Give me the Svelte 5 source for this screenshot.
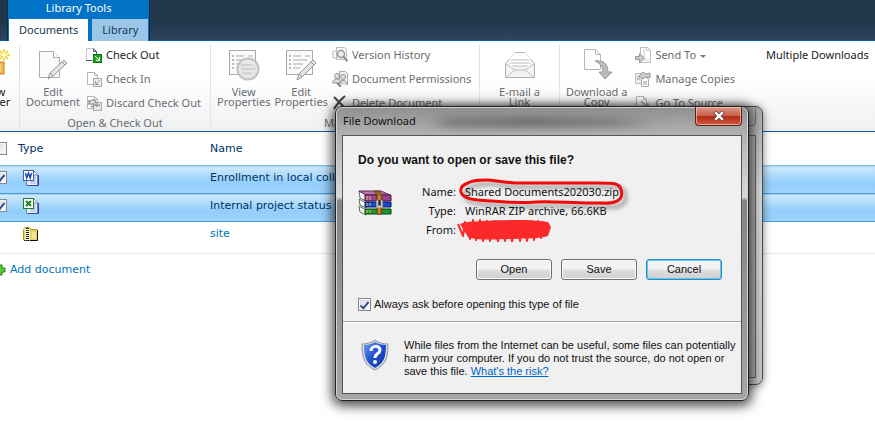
<script lang="ts">
  interface Row {
    kind: 'word' | 'excel' | 'zip';
    name: string;
    selected: boolean;
  }

  let rows: Row[] = $state([
    { kind: 'word', name: 'Enrollment in local college', selected: true },
    { kind: 'excel', name: 'Internal project status', selected: true },
    { kind: 'zip', name: 'site', selected: false }
  ]);

  let allSelected = $state(false);
  let alwaysAsk = $state(true);
</script>

{#snippet page()}
  <path d="M1.5 1.5h7l3 3v9h-10z" fill="#fff" stroke="#b5b5b5" />
  <path d="M8.5 1.5v3h3" fill="none" stroke="#b5b5b5" />
{/snippet}

{#snippet fileIcon(kind: Row['kind'])}
  <svg class="file-icon" width="16" height="16" viewBox="0 0 16 16">
    {#if kind === 'zip'}
      <path d="M1 4l2-3h4l2 3h6v11H1z" fill="#e4d565" />
      <path d="M.5 14V3.5L2 1.500h4l1.500 2H14" fill="none" stroke="#b0a000" />
      <path d="M14.500 4v10.500H1" fill="none" stroke="#111" />
      <path d="M4.500 2v13" stroke="#fff" stroke-width="4" />
      <path d="M4.500 2v13" stroke="#222" stroke-width="3" stroke-dasharray="1 1" />
      <path d="M9 6h4v7H9z" fill="#efe68f" />
    {:else}
      <path d="M4.500 .5h6l4 4v11h-11z" fill="#eef3ff" stroke="#647cc0" />
      <path d="M10.500 1v4h4" fill="#fff" stroke="#647cc0" />
      <path d="M5 15.500h10.500V5" fill="none" stroke="#344a91" />
      <path d="M7 7h6M7 9h6M7 11h6M7 13h6" stroke="#96abd9" />
      <rect
        x=".5" y=".5" width="10" height="10"
        fill="#fff" stroke={kind === 'word' ? '#3c60b5' : '#20802b'}
      />
      {#if kind === 'word'}
        <path d="M2.500 3l1.300 5 1.700-5 1.700 5 1.300-5" fill="none" stroke="#1d4ba5" stroke-width="1.500" />
      {:else}
        <path d="M3 3l5 5M8 3l-5 5" stroke="#168022" stroke-width="2" />
      {/if}
    {/if}
  </svg>
{/snippet}

<header class="top-bar">
  <div class="context-group">
    <div class="context-title">Library Tools</div>
    <nav class="tabs">
      <a class="tab active" href="#documents">Documents</a>
      <a class="tab" href="#library">Library</a>
    </nav>
  </div>
</header>

<div class="ribbon">
  <section class="group first">
    <button class="big strong">
      <svg width="32" height="32" viewBox="0 0 32 32">
        <path d="M2 13h24v12H2z" fill="#f1bc4b" stroke="#c77d15" />
        <path d="M4 15h19v7H4z" fill="#fbd983" />
        <path d="M26 0v12M20 6h12M22 2l8 8M30 2l-8 8" stroke="#f3d84a" stroke-width="2" />
        <path d="M26 3v6M23 6h6" stroke="#fffbd0" stroke-width="2" />
      </svg>
      <span>New<br />Folder</span>
    </button>
  </section>

  <section class="group">
    <div class="controls">
      <button class="big">
        <svg width="32" height="32" viewBox="0 0 32 32">
          <path d="M2.500 2.500h14l6 6v20h-20z" fill="#fafafa" stroke="#adadad" />
          <path d="M16.500 2.500v6h6" fill="#fff" stroke="#adadad" />
          <path d="M11 30l2-6 14-13 3 3-14 13z" fill="#e4e4e4" stroke="#999" />
          <path d="M13 24l3 3M25 13l3 3M11 30l2-2" stroke="#999" />
        </svg>
        <span>Edit<br />Document</span>
      </button>
      <div class="stack">
        <button class="small strong">
          <svg width="16" height="16" viewBox="0 0 16 16">
            <path d="M.5 13.500V1.500h7l4 4v8z" fill="#fff" />
            <path d="M0 13.500h6.500M7.500 1.500l3 3V7M7.500 1.500v3h3" fill="none" stroke="#48567e" />
            <path d="M.5 13V1.500h7" fill="none" stroke="#bdc6d9" />
            <rect x="7.500" y="7.500" width="8" height="8" fill="#1ca524" stroke="#087b10" />
            <path d="M9 9l4 4M13.500 10v3.500H10" fill="none" stroke="#fff" />
          </svg>
          Check Out
        </button>
        <button class="small">
          <svg width="16" height="16" viewBox="0 0 16 16">
            {@render page()}
            <rect x="7.500" y="7.500" width="8" height="8" fill="#ececec" stroke="#aaa" />
            <path d="M14 9l-4 4M9.500 10v3.500H13" fill="none" stroke="#999" />
          </svg>
          Check In
        </button>
        <button class="small">
          <svg width="16" height="16" viewBox="0 0 16 16">
            {@render page()}
            <rect x="7.500" y="7.500" width="8" height="8" fill="#e7e7e7" stroke="#aaa" />
            <path d="M3 9c1-5 6-5 7-1M3 5v4h4M5 12l6-3v2l3-1" fill="none" stroke="#999" stroke-width="1.500" />
          </svg>
          Discard Check Out
        </button>
      </div>
    </div>
    <div class="group-label">Open &amp; Check Out</div>
  </section>

  <section class="group manage">
    <div class="controls">
      <button class="big">
        <svg width="32" height="32" viewBox="0 0 32 32">
          <rect x="1.500" y="1.500" width="26" height="24" fill="#fafafa" stroke="#aaa" />
          <path d="M4 7h2M4 11h2M4 15h2M4 19h2" stroke="#777" />
          <path d="M8 7h8M8 11h10M8 15h5M8 19h5M20 7h5" stroke="#aaa" />
          <circle cx="20" cy="20" r="10.500" fill="#e4e4e4" fill-opacity=".9" stroke="#c2c2c2" stroke-width="2" />
          <path d="M13 16h12M13 20h14M14 24h9" stroke="#bbb" />
        </svg>
        <span>View<br />Properties</span>
      </button>
      <button class="big">
        <svg width="32" height="32" viewBox="0 0 32 32">
          <rect x="1.500" y="1.500" width="26" height="24" fill="#fafafa" stroke="#aaa" />
          <path d="M4 7h2M4 11h2M4 15h2M4 19h2" stroke="#777" />
          <path d="M8 7h8M8 11h14M8 15h10M8 19h7M20 7h5" stroke="#aaa" />
          <path d="M12 31l2-6 14-14 3 3-14 14z" fill="#e4e4e4" stroke="#999" />
          <path d="M14 25l3 3M26 13l3 3" stroke="#999" />
        </svg>
        <span>Edit<br />Properties</span>
      </button>
      <div class="stack">
        <button class="small">
          <svg width="16" height="16" viewBox="0 0 16 16">
            <path d="M1 4h4v7H1zM4.500 .5h8l2 2v10h-10z" fill="#f7f7f7" stroke="#bbb" />
            <circle cx="9" cy="7" r="3.500" fill="#eee" stroke="#999" stroke-width="1.500" />
            <path d="M11.500 9.500l4 5" stroke="#888" stroke-width="2" />
          </svg>
          Version History
        </button>
        <button class="small">
          <svg width="16" height="16" viewBox="0 0 16 16">
            <path d="M7.500 .5h6l2 2v11h-8z" fill="#eee" stroke="#aaa" />
            <circle cx="5" cy="5" r="2.500" fill="#ddd" stroke="#999" />
            <circle cx="11" cy="6" r="2.500" fill="#ddd" stroke="#999" />
            <path d="M.5 12c0-5 8-5 9 0zM7 14c0-6 8-6 8 0" fill="#ddd" stroke="#999" />
            <path d="M5 12l4 4" stroke="#888" stroke-width="2" />
          </svg>
          Document Permissions
        </button>
        <button class="small">
          <svg width="16" height="16" viewBox="0 0 16 16">
            <path d="M2 2l12 12M13 1C8 5 5 9 2 14" fill="none" stroke="#444" stroke-width="2" />
          </svg>
          Delete Document
        </button>
      </div>
    </div>
    <div class="group-label">Manage</div>
  </section>

  <section class="group share">
    <button class="big">
      <svg width="32" height="32" viewBox="0 0 32 32">
        <path d="M1.500 14.500l10-11h9l10 11v14h-29z" fill="#f4f4f4" stroke="#b3b3b3" />
        <path d="M6 13V9l5-5h10l5 5v9H6z" fill="#fff" />
        <path d="M2 15l9 6h10l9-6M2 28l9-7M30 28l-9-7M7 11h18M6 14h20M8 17h16" fill="none" stroke="#bbb" />
      </svg>
      <span>E-mail a<br />Link</span>
    </button>
  </section>

  <section class="group copies">
    <div class="controls">
      <button class="big">
        <svg width="32" height="32" viewBox="0 0 32 32">
          <path d="M3.500 .5h11l5 5v15h-16z" fill="#fcfcfc" stroke="#b5b5b5" />
          <path d="M14.500 .5v5h5" fill="none" stroke="#b5b5b5" />
          <path d="M14 12c10-1 13 4 13 11h4l-7 7-6-7h4c0-5-2-8-8-11z" fill="#bcbcbc" stroke="#999" />
        </svg>
        <span>Download a<br />Copy</span>
      </button>
      <div class="stack">
        <button class="small">
          <svg width="16" height="16" viewBox="0 0 16 16">
            <path d="M5.500 .5h7l3 3v12h-10z" fill="#fff" stroke="#bbb" />
            <path d="M11.500 .5v3h4M9 2v11h5" fill="none" stroke="#ccc" />
            <path d="M.5 9.500h4v-3l5 5-5 4v-3h-4z" fill="#ccc" stroke="#999" />
          </svg>
          Send To
          <svg class="caret" width="6" height="4" viewBox="0 0 6 4">
            <path d="M0 0h6L3 3z" fill="#777" />
          </svg>
        </button>
        <button class="small">
          <svg width="16" height="16" viewBox="0 0 16 16">
            <path d="M.5 2.500h8v10h-8z" fill="#eee" stroke="#bbb" />
            <path d="M6.500 6.500h5l2 2v7h-7z" fill="#fff" stroke="#aaa" />
            <path d="M4 5l4-4 3 2 4-1v5l-4-1-4 2zM2 6h3M2 8h3M8 11h4M8 13h4" fill="#ccc" stroke="#999" />
          </svg>
          Manage Copies
        </button>
        <button class="small">
          <svg width="16" height="16" viewBox="0 0 16 16">
            {@render page()}
            <path d="M6 6l7 7M13 8v5H8" fill="none" stroke="#bbb" stroke-width="2" />
          </svg>
          Go To Source
        </button>
      </div>
    </div>
  </section>

  <button class="small downloads">Multiple Downloads</button>
</div>

<main>
  <table>
    <thead>
      <tr>
        <th class="pick"><input type="checkbox" aria-label="Select all" bind:checked={allSelected} /></th>
        <th class="type">Type</th>
        <th>Name</th>
      </tr>
    </thead>
    <tbody>
      {#each rows as row (row.name)}
        <tr class:selected={row.selected}>
          <td class="pick">
            {#if row.selected}
              <input type="checkbox" aria-label={row.name} bind:checked={row.selected} />
            {/if}
          </td>
          <td class="type">{@render fileIcon(row.kind)}</td>
          <td>
            {#if row.selected}
              {row.name}
            {:else}
              <a href="#site">{row.name}</a>
            {/if}
          </td>
        </tr>
      {/each}
    </tbody>
  </table>
  <a class="add" href="#add">
    <svg width="12" height="12" viewBox="0 0 12 12">
      <path d="M4 1h4v3h3v4H8v3H4V8H1V4h3z" fill="#5ccc35" stroke="#238014" />
    </svg>
    Add document
  </a>
</main>

<div class="back-window">
  <div class="back-close"></div>
  <div class="back-body"></div>
</div>

<div class="dialog" role="dialog" aria-labelledby="dialog-title">
  <div class="title-bar">
    <span id="dialog-title">File Download</span>
    <div class="smudge"></div>
    <button class="close" aria-label="Close">
      <svg width="12" height="10" viewBox="0 0 12 10">
        <path d="M3 2l6 6M9 2l-6 6" stroke="#65403d" stroke-width="4" stroke-linecap="square" />
        <path d="M3 2l6 6M9 2l-6 6" stroke="#fff" stroke-width="2.400" stroke-linecap="square" />
      </svg>
    </button>
  </div>

  <div class="dialog-body">
    <div class="question">
      <h1>Do you want to open or save this file?</h1>
      <div class="file">
        <svg class="archive" width="34" height="26" viewBox="0 0 34 26">
          <path d="M1 1l7 4v6l-6-3zM1 9l7 4v5l-6-3zM1 16l7 4v5l-6-3z" fill="#fff" stroke="#666" />
          <path d="M1 1h22l9 4H8z" fill="#bc73b4" stroke="#5c2c50" />
          <path d="M7 5h26v6H7z" fill="#984195" stroke="#4c1741" />
          <path d="M7 12h26v5H7z" fill="#1c49d0" stroke="#051c63" />
          <path d="M7 19h26v5H7z" fill="#16982c" stroke="#06400f" />
          <path d="M9 6v4M12 6v4M9 13v3M12 13v3M9 20v3M12 20v3" stroke="#e5c75e" />
          <path d="M16 1h5l3 4v19h-5V5z" fill="#a26921" stroke="#64400e" />
          <path d="M21 6v18" stroke="#dbae52" />
          <rect x="19" y="11" width="5" height="6" fill="#888" stroke="#eee" />
          <path d="M21.500 10v5" stroke="#222" stroke-width="2" />
        </svg>
        <dl>
          <dt>Name:</dt>
          <dd class="circled">
            Shared Documents202030.zip
            <svg class="marker" width="172" height="34" viewBox="0 0 172 34">
              <path
                d="M12 6C17 3 22 3 30 3c9 0 19 3 33 3h78c15 0 20 0 23 4 3 6 2 12-3 14-5 3-12 2-26 2-22 0-39-2-55-1-24 2-41-1-58-2C10 22 6 19 5 15 4 10 7 8 12 6z"
                fill="none" stroke="#f00a0a" stroke-width="3"
              />
            </svg>
          </dd>
          <dt>Type:</dt>
          <dd>WinRAR ZIP archive, 66.6KB</dd>
          <dt>From:</dt>
          <dd>
            <svg class="scribble" width="98" height="24" viewBox="0 0 98 24">
              <path
                d="M1 6l5 12 2-14 5 17 3-19 3 20 4-20 3 21 4-20 3 20 4-20 4 21 3-20 4 19 4-19 3 20 4-20 4 19 4-20 3 20 4-20 3 19 4-19 3 17 4-15 2 9"
                fill="none" stroke="#f82e2e" stroke-width="2" stroke-linejoin="round"
              />
              <path d="M3 6c7-3 14-2 22-3 22-1 48-2 66 1l3 5-3 9c-9 3-22 2-34 3-18 0-36 2-46-2z" fill="#fb2a2a" />
            </svg>
          </dd>
        </dl>
      </div>
      <div class="actions">
        <button>Open</button>
        <button>Save</button>
        <button class="default">Cancel</button>
      </div>
      <label>
        <input type="checkbox" bind:checked={alwaysAsk} />
        Always ask before opening this type of file
      </label>
    </div>
    <div class="warning">
      <svg width="28" height="32" viewBox="0 0 28 32">
        <defs>
          <linearGradient id="shield" x1="0" y1="0" x2="1" y2="1">
            <stop offset="0" stop-color="#6f9deb" />
            <stop offset=".5" stop-color="#1d4ecf" />
            <stop offset="1" stop-color="#1738a0" />
          </linearGradient>
        </defs>
        <path d="M14 1c4 3 8 4 13 4 0 13-2 21-13 26C3 26 1 18 1 5c5 0 9-1 13-4z" fill="#d9dde5" stroke="#8c939f" />
        <path d="M14 3c3 2 7 3 11 3 0 12-2 18-11 23C5 24 3 18 3 6c4 0 8-1 11-3z" fill="url(#shield)" />
        <path d="M10 12c0-6 9-6 9-1 0 4-5 3-5 8" fill="none" stroke="#fff" stroke-width="3" />
        <circle cx="14" cy="23" r="2" fill="#fff" />
      </svg>
      <p>
        While files from the Internet can be useful, some files can potentially
        harm your computer. If you do not trust the source, do not open or
        save this file. <a href="#risk">What's the risk?</a>
      </p>
    </div>
  </div>
</div>

<style>
  :global(body) {
    margin: 0;
    background: #fff;
    overflow: hidden;
  }

  button {
    font: inherit;
    color: inherit;
    padding: 0;
    border: 0;
    background: none;
  }

  svg {
    display: block;
    flex-shrink: 0;
  }

  /* Top bar and tabs */
  .top-bar {
    display: flex;
    height: 40px;
    padding-left: 7px;
    background: linear-gradient(#21374c 60%, #30455e);
    border-bottom: 1px solid #0464b0;
    font: 11px/16px "Noto Sans", sans-serif;
  }

  .context-group {
    display: flex;
    flex-direction: column;
    justify-content: space-between;
    height: 41px;
    background: #0272c6;
    border: solid #0b2b4a;
    border-width: 0 1px;
  }

  .context-title {
    color: #fff;
    text-align: center;
  }

  .tabs {
    display: flex;
    gap: 4px;
    padding: 0 1px;
    line-height: 22px;
  }

  .tab {
    padding: 0 10px;
    color: #21374c;
    background: #9bc6e8;
    text-decoration: none;
  }

  .tab.active {
    background: #fff;
  }

  /* Ribbon */
  .ribbon {
    display: flex;
    height: 90px;
    background: linear-gradient(#fff 40%, #eff0f2);
    border-bottom: 1px solid #0e5c9f;
    color: #6a6d70;
    font: 11px/16px "Noto Sans", sans-serif;
    white-space: nowrap;
  }

  .group {
    display: flex;
    flex-direction: column;
    justify-content: space-between;
    flex-shrink: 0;
    box-sizing: border-box;
    width: 191px;
    margin: 4px 0 2px;
    padding: 0 6px;
    border-right: 1px solid #e2e3e5;
  }

  .group.first {
    width: 40px;
    margin-left: -20px;
    padding: 0;
    align-items: flex-start;
  }

  .group.manage {
    width: 269px;
  }

  .group.share {
    width: 80px;
  }

  .group.copies {
    width: 198px;
    border: 0;
  }

  .controls {
    display: flex;
    gap: 6px;
  }

  .manage .controls {
    gap: 4px;
  }

  .copies .controls {
    gap: 8px;
  }

  .big {
    display: flex;
    flex-direction: column;
    align-items: center;
    gap: 6px;
    padding-top: 4px;
    line-height: 10px;
  }

  .first .big {
    width: 28px;
  }

  .stack {
    display: flex;
    flex-direction: column;
    gap: 8px;
    padding-top: 2px;
  }

  .small {
    display: flex;
    align-items: center;
    gap: 4px;
    height: 16px;
  }

  .strong,
  .downloads {
    color: #222;
  }

  .downloads {
    margin-top: 6px;
    margin-left: 8px;
  }

  .caret {
    margin-top: 4px;
  }

  .group-label {
    line-height: 12px;
    text-align: center;
  }

  /* Document list */
  main {
    margin-left: -6px;
    color: #003366;
    font: 11px/16px "DejaVu Sans", Verdana, sans-serif;
  }

  table {
    width: 100%;
    border-collapse: collapse;
    table-layout: fixed;
  }

  th,
  td {
    height: 23px;
    padding: 0;
    font-weight: normal;
    text-align: left;
    white-space: nowrap;
  }

  th {
    height: 33px;
  }

  td {
    padding-bottom: 4px;
  }

  .pick {
    width: 24px;
  }

  .type {
    width: 192px;
  }

  tr.selected {
    background: linear-gradient(#cfe9fc, #93cffb 60%, #9bd3fc);
    border-top: 1px solid #8fc3e4;
    border-bottom: 1px solid #4e9bd0;
  }

  tbody tr:last-child {
    border-bottom: 1px solid #e8e8e8;
  }

  tbody tr:last-child td {
    padding-bottom: 8px;
  }

  .file-icon {
    margin-left: 5px;
  }

  a {
    color: #0072bc;
    text-decoration: none;
  }

  .add {
    display: flex;
    align-items: center;
    gap: 4px;
    padding-top: 8px;
  }

  input[type="checkbox"] {
    appearance: none;
    display: grid;
    place-items: center;
    box-sizing: border-box;
    width: 13px;
    height: 13px;
    margin: 0;
    border: 1px solid #85898f;
    background: linear-gradient(135deg, #d4d7dc, #fff);
    box-shadow: inset 0 0 0 1px #f5f5f5;
  }

  input[type="checkbox"]:checked::before {
    content: "";
    width: 3px;
    height: 7px;
    border: solid #3b4f91;
    border-width: 0 2px 2px 0;
    transform: rotate(40deg);
  }

  /* Window behind the dialog */
  .back-window {
    position: absolute;
    top: 106px;
    left: 349px;
    display: flex;
    flex-direction: column;
    box-sizing: border-box;
    width: 414px;
    height: 279px;
    padding: 1px 6px 6px;
    border: 1px solid #4d4d4d;
    border-radius: 7px;
    background: linear-gradient(#a9aaab, #d7d8d9 30%, #c5c6c7);
    box-shadow: 0 1px 8px rgba(0, 0, 0, 0.5);
  }

  .back-close {
    align-self: flex-end;
    width: 46px;
    height: 17px;
    border: 1px solid #777;
    border-top: 0;
    border-radius: 0 0 4px 4px;
  }

  .back-body {
    flex: 1;
    margin-top: 9px;
    border: 1px solid #666;
    background: #b5b5b5;
  }

  /* File download dialog */
  .dialog {
    position: absolute;
    top: 106px;
    left: 335px;
    box-sizing: border-box;
    width: 414px;
    padding: 0 6px 6px;
    border: 1px solid #222;
    border-radius: 7px;
    background: linear-gradient(#8f8f8f, #b2b2b2 28px, #d9d9d9 90px, #858585 94px, #a6a6a6);
    box-shadow:
      inset 0 0 0 1px #d5d5d5,
      0 2px 12px 3px rgba(0, 0, 0, 0.7);
    color: #111;
    font: 11px/13px "Liberation Sans", Arial, sans-serif;
  }

  .title-bar {
    display: flex;
    align-items: flex-start;
    height: 28px;
    padding-left: 1px;
    font: 11px/28px "Noto Sans", sans-serif;
  }

  .smudge {
    flex: 1;
    height: 10px;
    margin: 10px 36px 0 12px;
    border-radius: 5px;
    background: linear-gradient(90deg, transparent, #777 10%, #686868 45%, #7c7c7c 80%, transparent);
    filter: blur(4px);
  }

  .close {
    display: grid;
    place-items: center;
    width: 47px;
    height: 19px;
    border: 1px solid #59211b;
    border-top: 0;
    border-radius: 0 0 4px 4px;
    background: linear-gradient(#dc9788, #cb5f4d 48%, #b22c18 52%, #d4563a);
    box-shadow: inset 0 0 0 1px rgba(255, 220, 210, 0.6);
  }

  .dialog-body {
    border: 1px solid #555;
    background: #f0f0f0;
  }

  .question {
    padding: 16px 15px 10px;
    border-bottom: 1px solid #a0a0a0;
  }

  h1 {
    margin: 0;
    font: bold 12px/16px "Liberation Sans", Arial, sans-serif;
  }

  .file {
    display: flex;
    align-items: flex-start;
    gap: 24px;
    margin-top: 16px;
  }

  .archive {
    margin-top: 6px;
  }

  dl {
    display: grid;
    grid-template-columns: 40px auto;
    gap: 3px 9px;
    margin: 0;
    font: 11px/16px "Noto Sans", sans-serif;
  }

  dt {
    text-align: right;
  }

  dd {
    margin: 0;
  }

  .circled {
    position: relative;
  }

  .marker {
    position: absolute;
    top: -7px;
    left: -9px;
    filter: drop-shadow(4px 4px 2px rgba(0, 0, 0, 0.4));
  }

  .scribble {
    margin: -4px 0 -4px -8px;
  }

  .actions {
    display: flex;
    justify-content: flex-end;
    gap: 9px;
    margin: 21px 4px 0 0;
  }

  .actions button {
    width: 76px;
    height: 21px;
    border: 1px solid #707070;
    border-radius: 3px;
    background: linear-gradient(#f3f3f3 48%, #dedede 52%, #d0d0d0);
    box-shadow: inset 0 0 0 1px #fbfbfb;
  }

  .actions .default {
    border-color: #3388bb;
    box-shadow: inset 0 0 0 1px #50cdf5;
  }

  label {
    display: flex;
    align-items: center;
    gap: 3px;
    margin-top: 18px;
  }

  .warning {
    display: flex;
    align-items: flex-start;
    gap: 15px;
    padding: 16px 2px 15px 18px;
    border-top: 1px solid #fff;
  }

  p {
    margin: 0;
  }

  p a {
    color: #0066cc;
    text-decoration: underline;
  }
</style>
